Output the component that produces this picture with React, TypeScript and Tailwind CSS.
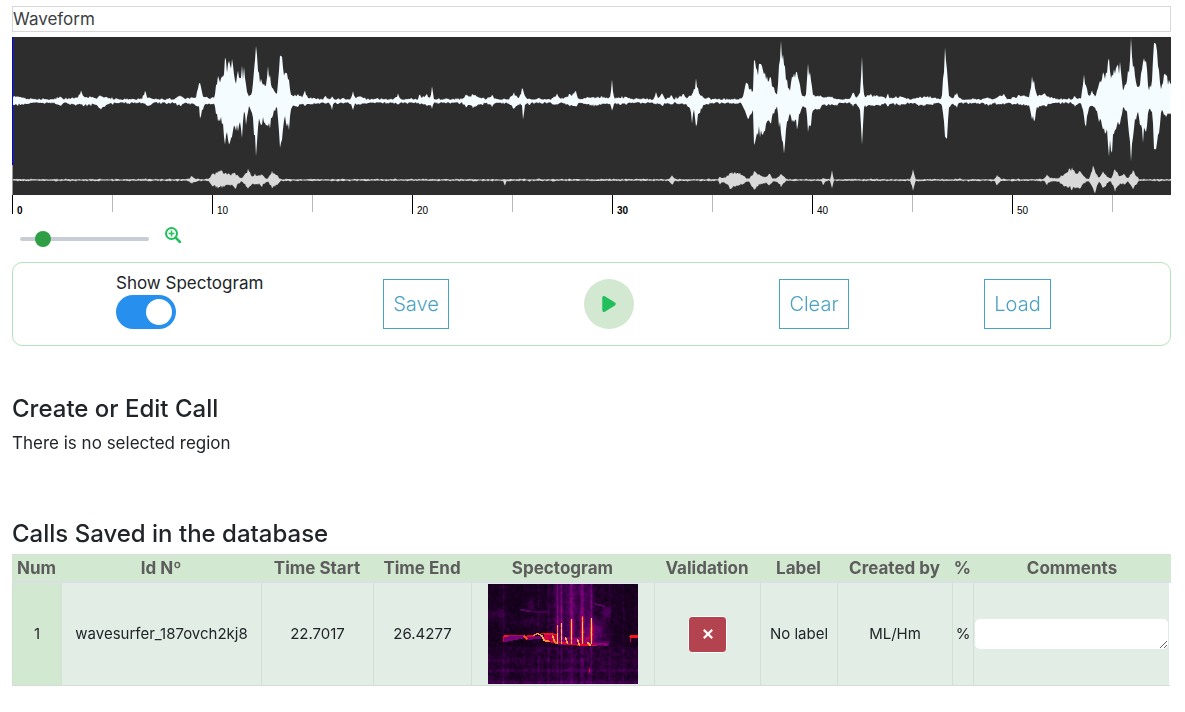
import { useState } from "react";
import { FaPlay, FaXmark } from "react-icons/fa6";

type Peak = [x: number, up: number, down: number];

const MAIN: Peak[] = [
  [0, 4, 4], [5, 3, 3], [20, 1, 1], [44, 1, 1], [48, 4, 4], [52, 1, 1], [66, 3, 3], [69, 10, 3], [71, 4, 4], [84, 2, 2], [89, 4, 8], [95, 3, 3], [103, 1, 1],
  [130, 1, 1], [133, 8, 2], [135, 3, 4], [142, 1, 1], [162, 1, 1], [168, 5, 4], [173, 1, 1], [184, 3, 3], [187, 16, 4], [188, 17, 17], [191, 4, 8], [194, 2, 2],
  [202, 2, 2], [204, 14, 12], [206, 23, 20], [208, 18, 20], [210, 24, 22], [213, 42, 43], [216, 36, 38], [217, 38, 43], [220, 40, 35], [223, 20, 25],
  [226, 30, 30], [228, 22, 20], [230, 35, 36], [231, 20, 20], [232, 32, 10], [234, 16, 22], [237, 3, 4], [240, 8, 10], [242, 30, 32], [244, 54, 54], [246, 28, 25],
  [250, 18, 22], [253, 14, 20], [256, 33, 25], [258, 25, 27], [261, 12, 13], [265, 6, 6], [267, 30, 30], [268, 45, 46], [270, 44, 38], [272, 25, 18],
  [274, 26, 20], [277, 20, 28], [279, 5, 6], [286, 6, 4], [290, 3, 2], [293, 10, 4], [296, 2, 2], [311, 1, 1], [313, 4, 2], [317, 1, 1], [320, 3, 7], [322, 1, 1],
  [338, 1, 1], [341, 9, 8], [343, 2, 2], [348, 4, 3], [354, 1, 1], [383, 1, 1], [386, 7, 3], [389, 1, 1], [406, 1, 1], [408, 6, 3], [410, 2, 2], [415, 6, 4],
  [418, 2, 3], [420, 13, 6], [422, 1, 1], [450, 1, 1], [454, 6, 5], [457, 3, 3], [461, 6, 5], [468, 3, 3], [474, 1, 1], [480, 5, 4], [484, 1, 1], [497, 1, 1], [502, 7, 7],
  [507, 2, 2], [510, 12, 4], [511, 10, 18], [513, 3, 3], [520, 1, 1], [540, 1, 1], [545, 6, 3], [549, 1, 1], [564, 8, 5], [566, 1, 1], [578, 3, 3], [582, 3, 4],
  [590, 3, 2], [598, 2, 2], [600, 21, 9], [602, 2, 2], [613, 3, 2], [620, 1, 1], [642, 1, 1], [644, 8, 3], [646, 2, 2], [650, 6, 4], [654, 1, 1], [659, 5, 3],
  [662, 1, 1], [672, 6, 2], [674, 2, 2], [678, 5, 6], [680, 6, 22], [682, 10, 8], [684, 22, 25], [687, 7, 12], [691, 3, 4], [698, 1, 1], [728, 1, 1],
  [731, 4, 4], [734, 18, 12], [736, 16, 17], [739, 12, 12], [741, 10, 8], [742, 40, 43], [745, 30, 30], [748, 36, 35], [751, 30, 33], [755, 24, 20], [759, 22, 22],
  [763, 8, 8], [765, 6, 5], [767, 35, 25], [769, 60, 30], [772, 35, 52], [775, 20, 20], [778, 8, 12], [780, 24, 20], [785, 28, 27], [788, 15, 12], [790, 5, 6],
  [794, 5, 6], [796, 37, 30], [799, 20, 22], [801, 5, 8], [808, 5, 7], [812, 2, 3], [818, 4, 3], [823, 2, 4], [828, 1, 1], [838, 1, 1], [841, 8, 4], [844, 2, 2], [848, 8, 8],
  [850, 44, 43], [852, 5, 5], [858, 5, 4], [868, 4, 3], [874, 2, 2], [876, 7, 5], [878, 2, 2], [888, 4, 3], [898, 1, 1], [908, 4, 3], [918, 3, 3], [928, 1, 1], [930, 4, 4],
  [933, 53, 35], [935, 30, 37], [937, 4, 6], [941, 2, 2], [945, 7, 5], [947, 1, 1], [970, 1, 1], [976, 3, 4], [980, 1, 1], [992, 5, 2], [996, 1, 1], [1010, 5, 3],
  [1017, 3, 3], [1020, 23, 18], [1022, 20, 20], [1025, 4, 5], [1033, 6, 4], [1040, 2, 2], [1045, 1, 1], [1060, 1, 1], [1063, 4, 5], [1066, 1, 1], [1069, 2, 2], [1072, 26, 15], [1074, 15, 25],
  [1077, 5, 6], [1080, 9, 4], [1083, 3, 6], [1087, 15, 20], [1091, 28, 28], [1094, 28, 30], [1097, 41, 55], [1100, 25, 50], [1104, 32, 28], [1108, 38, 22],
  [1111, 10, 6], [1115, 20, 10], [1118, 40, 40], [1119, 61, 60], [1122, 35, 25], [1126, 12, 10], [1131, 38, 40], [1134, 40, 30], [1137, 10, 8], [1140, 20, 10],
  [1142, 56, 48], [1144, 56, 48], [1147, 30, 30], [1149, 10, 10], [1152, 26, 12], [1154, 25, 15], [1159, 15, 12],
];

const OVERVIEW: Peak[] = [
  [0, 0, 0], [176, 0, 0], [180, 3, 3], [185, 0, 0], [196, 0, 0], [200, 5, 5], [206, 7, 8], [210, 9, 7], [216, 6, 5], [220, 5, 4], [223, 7, 8], [229, 1, 1], [231, 2, 2],
  [236, 11, 8], [240, 3, 3], [243, 5, 4], [245, 3, 3], [250, 5, 6], [254, 1, 1], [256, 1, 1], [260, 9, 8], [265, 4, 5], [269, 0, 0], [491, 0, 0], [493, 0, 5], [495, 0, 0],
  [656, 0, 0], [660, 4, 4], [664, 0, 0], [706, 0, 0], [708, 3, 3], [712, 1, 1], [718, 7, 8], [723, 7, 6], [730, 5, 4], [735, 1, 1], [737, 1, 1], [742, 8, 9], [748, 4, 4],
  [754, 2, 2], [757, 6, 5], [761, 1, 1], [764, 1, 1], [769, 6, 6], [774, 0, 0], [809, 0, 0], [811, 1, 5], [814, 0, 0], [818, 0, 0], [820, 9, 8], [822, 0, 0], [898, 0, 0],
  [901, 10, 10], [904, 0, 0], [982, 0, 0], [985, 4, 4], [989, 0, 0], [1032, 0, 0], [1035, 5, 4], [1039, 1, 1], [1046, 1, 1], [1053, 6, 6], [1060, 12, 9], [1063, 7, 8],
  [1068, 8, 8], [1074, 1, 1], [1077, 1, 1], [1081, 14, 8], [1083, 8, 13], [1087, 1, 1], [1091, 8, 8], [1097, 1, 1], [1099, 1, 1], [1103, 10, 11], [1108, 3, 3], [1112, 5, 4],
  [1116, 1, 1], [1121, 9, 9], [1127, 0, 0], [1159, 0, 0],
];

const hash = (x: number, y: number) => {
  const s = Math.sin(x * 127.1 + y * 311.7) * 43758.5453;
  return s - Math.floor(s);
};

function envelope(peaks: Peak[], mid: number, floor: number, width = 1159) {
  const top: string[] = [];
  const bottom: string[] = [];
  let k = 0;
  for (let x = 0; x <= width; x++) {
    while (k < peaks.length - 2 && peaks[k + 1][0] < x) k++;
    const [x0, u0, d0] = peaks[k];
    const [x1, u1, d1] = peaks[k + 1];
    const t = (x - x0) / (x1 - x0);
    const isPeak = x === x0 || x === x1;
    const up = (u0 + (u1 - u0) * t) * (isPeak ? 1 : 0.7 + 0.4 * hash(x, 1));
    const down = (d0 + (d1 - d0) * t) * (isPeak ? 1 : 0.7 + 0.4 * hash(x, 3));
    const u = up + floor * (0.3 + 1.6 * hash(x, 2) ** 2);
    const d = down + floor * (0.3 + 1.6 * hash(x, 4) ** 2);
    top.push(`${x} ${(mid - u).toFixed(1)}`);
    bottom.unshift(`${x} ${(mid + d).toFixed(1)}`);
  }
  return `M${top.join("L")}L${bottom.join("L")}Z`;
}

const MAIN_PATH = envelope(MAIN, 64, 1.2);
const OVERVIEW_PATH = envelope(OVERVIEW, 15, 0.8);

const RAMP: [number, number, number, number][] = [
  [0, 8, 0, 12], [0.2, 32, 0, 40], [0.42, 82, 0, 96], [0.6, 125, 4, 120], [0.72, 205, 0, 70], [0.84, 245, 10, 30], [0.94, 255, 120, 30], [1, 250, 205, 80],
];
const LEVELS = 40;

function rampColor(v: number) {
  let i = 0;
  while (i < RAMP.length - 2 && RAMP[i + 1][0] < v) i++;
  const a = RAMP[i];
  const b = RAMP[i + 1];
  const t = (v - a[0]) / (b[0] - a[0]);
  return `rgb(${[1, 2, 3].map((c) => Math.round(a[c] + (b[c] - a[c]) * t)).join(",")})`;
}

const SEGMENTS: [number, number, number, number, number, number][] = [
  [15, 52, 20, 51, 0.85, 0.9], [21, 51, 36, 51, 0.7, 0.8], [36, 52, 38, 54, 0.9, 1], [38, 52, 46, 51, 0.8, 0.9],
  [45, 51, 49, 49, 0.94, 0.8], [49, 49, 53, 51, 0.98, 0.8], [53, 51, 56, 56, 0.98, 0.9], [56, 56, 61, 57, 0.94, 0.8], [53, 49, 68, 50, 0.84, 0.8],
  [64, 51, 66, 57, 0.98, 0.8], [66, 57, 68, 59, 0.92, 0.8], [61, 57, 80, 59, 0.8, 0.8], [77, 53, 79, 59, 0.98, 0.8], [89, 55, 91, 61, 0.98, 0.8],
  [99, 58, 102, 61, 0.97, 0.8], [80, 60, 108, 61, 0.8, 0.7], [104, 59, 118, 60, 0.62, 1.2], [142, 52, 150, 52, 0.86, 1.1], [142, 53, 142, 57, 0.76, 0.6],
  [15, 53, 15, 57, 0.76, 0.6], [32, 25, 42, 27, 0.46, 0.8], [42, 27, 62, 28, 0.34, 0.8], [106, 19, 116, 22, 0.48, 0.8],
];

function distance(px: number, py: number, x0: number, y0: number, x1: number, y1: number) {
  const dx = x1 - x0;
  const dy = y1 - y0;
  const t = Math.max(0, Math.min(1, ((px - x0) * dx + (py - y0) * dy) / (dx * dx + dy * dy)));
  return Math.hypot(px - x0 - t * dx, py - y0 - t * dy);
}

const bell = (d: number, w: number) => Math.exp(-(d * d) / (w * w));

function smoothNoise(x: number, y: number, size: number) {
  const gx = Math.floor(x / size);
  const gy = Math.floor(y / size);
  const fx = x / size - gx;
  const fy = y / size - gy;
  const a = hash(gx, gy) * (1 - fx) + hash(gx + 1, gy) * fx;
  const b = hash(gx, gy + 1) * (1 - fx) + hash(gx + 1, gy + 1) * fx;
  return a * (1 - fy) + b * fy;
}

function intensity(x: number, y: number) {
  let v = 0.02 + 0.17 * smoothNoise(x, y, 2) + 0.07 * smoothNoise(x + 300, 7, 3);
  if (y > 62) v += 0.07;
  v += 0.1 * bell(y - 86, 1.5) + 0.05 * bell(y - 76, 2) + 0.12 * bell(y - 98, 2);
  for (const c of [15, 50, 60, 121, 135]) v += 0.1 * bell(x - c, 1);
  v += 0.13 * bell(x - 86, 24) * (y < 62 ? 1 : 0.3);
  v += 0.2 * bell(x - 43, 3) * bell(y - 20, 6);
  v += 0.26 * bell(x - 118, 4) * bell(y - 28, 7);
  v += 0.15 * bell(x - 8, 10) * bell(y - 30, 6);
  v += 0.1 * bell(x - 40, 22) * bell(y - 37, 4);
  v += 0.28 * bell(x - 106, 11) * bell(y - 48, 12);
  for (const [c, from, w] of [[69, 40, 1], [73, 38, 1], [83, 34, 2], [94, 31, 2], [103, 33, 1]]) {
    if (y < 60) {
      v += 0.1 * bell(x - c, w + 3);
      v += bell(x - c, w) * (0.18 + 0.002 * y) + (y > from ? 0.36 * bell(x - c, 1) : 0);
    } else {
      v += bell(x - c, w) * 0.12;
    }
  }
  if (x > 15 && x < 36 && y >= 52 && y < 58 - (x - 15) / 5) v = Math.max(v, 0.58);
  if (x > 37 && x < 54 && y >= 52 && y < 56 - (x - 37) / 8) v = Math.max(v, 0.56);
  if (x > 55 && x < 70 && y >= 50 && y < 57) v = Math.max(v, 0.6 + 0.18 * smoothNoise(x, y, 2));
  if (x >= 70 && x < 104 && y > 52 && y < 61) v = Math.max(v, 0.5 + 0.22 * smoothNoise(x, y, 2));
  if (x >= 104 && x < 121 && y > 56 && y < 62) v = Math.max(v, 0.43);
  v = Math.max(v, 0.84 * bell(x - 101, 1.2) * bell(y - 86, 4));
  for (const [x0, y0, x1, y1, level, w] of SEGMENTS) {
    if (distance(x, y, x0, y0, x1, y1) <= w) v = Math.max(v, level);
  }
  return Math.min(1, v);
}

const SPECTROGRAM = (() => {
  const paths: string[] = Array.from({ length: LEVELS + 1 }, () => "");
  for (let y = 0; y < 100; y++) {
    let start = 0;
    let level = Math.round(intensity(0, y) * LEVELS);
    for (let x = 1; x <= 150; x++) {
      const next = x < 150 ? Math.round(intensity(x, y) * LEVELS) : -1;
      if (next !== level) {
        paths[level] += `M${start} ${y}h${x - start}v1h${start - x}z`;
        start = x;
        level = next;
      }
    }
  }
  return paths;
})();

function Spectrogram() {
  return (
    <svg viewBox="0 0 150 100" shapeRendering="crispEdges" role="img" aria-label="Spectrogram" className="mx-auto block h-[100px] w-[150px]">
      {SPECTROGRAM.map((d, i) => d && <path key={i} d={d} fill={rampColor(i / LEVELS)} />)}
    </svg>
  );
}

function ZoomInIcon() {
  return (
    <svg viewBox="0 0 16 16" fill="none" stroke="currentColor" aria-hidden="true" className="size-4">
      <circle cx="6.5" cy="6.5" r="5.5" strokeWidth="2" />
      <path d="M6.5 3.6v5.8M3.6 6.5h5.8" strokeWidth="1.5" />
      <path d="M10.6 10.6L15 15" strokeWidth="2.6" strokeLinecap="round" />
    </svg>
  );
}

const TICKS = Array.from({ length: 12 }, (_, i) => i * 5);

function Timeline() {
  return (
    <div className="flex h-5 overflow-hidden font-['Liberation_Sans',sans-serif] text-[10px] leading-none text-black">
      {TICKS.map((t) => (
        <div
          key={t}
          className={
            t % 10 === 0
              ? "h-[19px] w-[100px] shrink-0 border-l border-black pt-[11px] pl-1"
              : "h-[17px] w-[100px] shrink-0 border-l border-[#b8b8b8]"
          }
        >
          {t % 10 === 0 && <span className={t % 30 === 0 ? "font-bold" : ""}>{t}</span>}
        </div>
      ))}
    </div>
  );
}

function ActionButton({ label }: { label: string }) {
  return (
    <button className="h-[50px] justify-self-center border border-[#4ba3c3] bg-white px-[9px] text-xl font-light text-[#4ba3c3]">
      {label}
    </button>
  );
}

const CELL = "border-b border-l border-[#d2dfd5] p-0";

export default function App() {
  const [zoom, setZoom] = useState(13);
  const [spectrogram, setSpectrogram] = useState(true);
  const [comment, setComment] = useState("");

  return (
    <main className="bg-white pt-1.5 pr-[14px] pb-6 pl-3 font-['Inter',sans-serif] text-[17px] text-[#212529]">
      <div className="h-[26px] border border-[#d8d8d8] leading-6 text-[#3c4044]">Waveform</div>

      <section aria-label="Waveform" className="mt-[5px]">
        <div className="bg-[#2d2d2d]">
          <svg viewBox="0 0 1159 128" preserveAspectRatio="none" className="block h-32 w-full">
            <path d={MAIN_PATH} fill="#f5fcff" />
            <rect width="1" height="128" fill="#0000ff" />
          </svg>
          <svg viewBox="0 0 1159 30" preserveAspectRatio="none" className="block h-[30px] w-full">
            <rect y="14.5" width="1159" height="1" fill="#8a8a8a" />
            <path d={OVERVIEW_PATH} fill="#d9d9d9" />
            <rect width="1" height="30" fill="#999" />
          </svg>
        </div>
        <Timeline />
      </section>

      <div className="flex h-10 items-start gap-4 pt-3 pl-2">
        <input
          type="range"
          aria-label="Zoom"
          min={0}
          max={100}
          value={zoom}
          onChange={(e) => setZoom(Number(e.target.value))}
          className="mt-[10px] h-1 w-[129px] appearance-none rounded-full bg-[#c8ccd4] [&::-webkit-slider-thumb]:size-4 [&::-webkit-slider-thumb]:appearance-none [&::-webkit-slider-thumb]:rounded-full [&::-webkit-slider-thumb]:bg-[#2f9e44]"
        />
        <button aria-label="Zoom in" className="text-[#22c05c]">
          <ZoomInIcon />
        </button>
      </div>

      <section className="mt-[7px] grid grid-cols-[266fr_186fr_200fr_210fr_197fr] items-end rounded-[10px] border border-[#b5e2bc] pt-[9px] pr-[54px] pb-4 pl-11">
        <label className="w-[148px] cursor-pointer justify-self-center">
          <span className="block leading-[23px] whitespace-nowrap">Show Spectogram</span>
          <input
            type="checkbox"
            role="switch"
            checked={spectrogram}
            onChange={(e) => setSpectrogram(e.target.checked)}
            className="peer sr-only"
          />
          <span className="flex h-[34px] w-[60px] items-center rounded-full bg-[#ccc] px-1 peer-checked:justify-end peer-checked:bg-[#2790ee]">
            <span className="size-[26px] rounded-full bg-white" />
          </span>
        </label>
        <ActionButton label="Save" />
        <button aria-label="Play" className="flex size-[50px] items-center justify-center justify-self-center rounded-full bg-[#d2e8d0] text-[#22c05c]">
          <FaPlay className="size-[18px]" />
        </button>
        <ActionButton label="Clear" />
        <ActionButton label="Load" />
      </section>

      <section className="mt-12">
        <h2 className="text-2xl leading-[29px] font-medium">Create or Edit Call</h2>
        <p className="mt-2 leading-6">There is no selected region</p>
      </section>

      <section className="mt-16">
        <h2 className="text-2xl leading-[29px] font-medium">Calls Saved in the database</h2>
        <table className="mt-1.5 w-full table-fixed border-separate border-spacing-0 text-center">
          <colgroup>
            <col className="w-[49px]" />
            <col className="w-[200px]" />
            <col className="w-[112px]" />
            <col className="w-[98px]" />
            <col className="w-[183px]" />
            <col className="w-[106px]" />
            <col className="w-[77px]" />
            <col className="w-[115px]" />
            <col className="w-[21px]" />
            <col />
          </colgroup>
          <thead>
            <tr className="h-[29px] bg-[#d2e8d0] text-[17px] leading-[26px] text-[#5c5c5c]">
              {["Num", "Id Nº", "Time Start", "Time End", "Spectogram", "Validation", "Label", "Created by", "%", "Comments"].map((h) => (
                <th key={h} scope="col" className="border-t border-b-2 border-t-[#d5e0d6] border-b-[#d9dfe2] p-0 font-bold whitespace-nowrap">
                  {h}
                </th>
              ))}
            </tr>
          </thead>
          <tbody>
            <tr className="h-[103px] bg-[#e2ede5] text-[15px]">
              <th scope="row" className={`${CELL} bg-[#d2e8d0] font-normal`}>1</th>
              <td className={CELL}>wavesurfer_187ovch2kj8</td>
              <td className={CELL}>22.7017</td>
              <td className={CELL}>26.4277</td>
              <td className={CELL}>
                <Spectrogram />
              </td>
              <td className={CELL}>
                <button aria-label="Reject" className="mx-auto flex h-[37px] w-[39px] items-center justify-center rounded border border-white bg-[#b3434f] text-white">
                  <FaXmark className="size-[14px] stroke-current stroke-[30]" />
                </button>
              </td>
              <td className={CELL}>No label</td>
              <td className={CELL}>ML/Hm</td>
              <td className={CELL}>%</td>
              <td className={`${CELL} border-r-2 border-r-white px-px`}>
                <textarea
                  aria-label="Comments"
                  rows={1}
                  value={comment}
                  onChange={(e) => setComment(e.target.value)}
                  className="block h-[30px] w-full rounded-[5px] bg-white px-2 py-1"
                />
              </td>
            </tr>
          </tbody>
        </table>
      </section>
    </main>
  );
}
